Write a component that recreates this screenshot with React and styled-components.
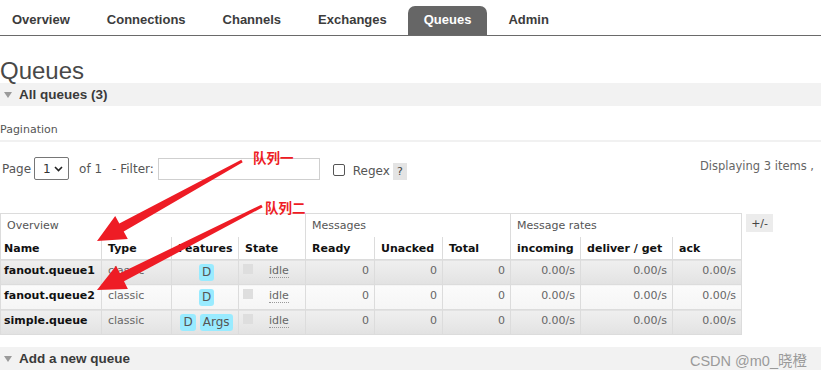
import React from "react";
import styled, { createGlobalStyle } from "styled-components";

const Global = createGlobalStyle`
  html, body { margin: 0; padding: 0; background: #fff; overflow: hidden; }
  body { width: 821px; height: 373px; font-family: "DejaVu Sans", Verdana, sans-serif; color: #484848; }
`;

const Page = styled.div`
  position: relative;
  width: 821px;
  height: 373px;
  overflow: hidden;
`;

const Nav = styled.ul`
  display: flex;
  gap: 5px;
  margin: 0;
  padding: 6px 0 0 0;
  list-style: none;
  border-bottom: 1px solid #6a6a6a;
  height: 29px;
`;

const Tab = styled.li`
  padding: 0 16px;
  margin-left: ${(p) => (p.$first ? "-4px" : "0")};
  height: 29px;
  line-height: 28px;
  font-family: "Liberation Sans", Arial, sans-serif;
  font-weight: bold;
  font-size: 13px;
  color: ${(p) => (p.$active ? "#fff" : "#3c3c3c")};
  background: ${(p) => (p.$active ? "#666" : "transparent")};
  border-radius: ${(p) => (p.$active ? "7px 7px 0 0" : "0")};
`;

const Title = styled.h1`
  margin: 23px 0 0 0;
  font-family: "Liberation Sans", Arial, sans-serif;
  font-weight: normal;
  font-size: 24px;
  line-height: 24px;
  color: #484848;
`;

const SectionBar = styled.div`
  display: flex;
  align-items: center;
  height: 23px;
  margin-top: ${(p) => p.$mt || 0}px;
  background: #f2f2f2;
  padding-left: 4px;
  gap: 7px;
`;

const Tri = styled.span`
  width: 0;
  height: 0;
  border-left: 4px solid transparent;
  border-right: 4px solid transparent;
  border-top: 6px solid #9a9a9a;
`;

const SectionLabel = styled.span`
  font-family: "Liberation Sans", Arial, sans-serif;
  font-weight: bold;
  font-size: ${(p) => p.$size || 13}px;
  color: #3a3a3a;
`;

const Watermark = styled.span`
  margin-left: auto;
  margin-right: 14px;
  font-family: "Liberation Sans Narrow", "Liberation Sans", "Noto Sans CJK SC", sans-serif;
  font-size: 14.5px;
  color: #9a9a9a;
  margin-top: 2px;
`;

const SubHead = styled.div`
  margin-top: 17px;
  font-size: 11px;
  line-height: 14px;
  padding-bottom: 3px;
  border-bottom: 2px solid #f1f1f1;
  color: #555;
`;

const FilterRow = styled.div`
  display: flex;
  align-items: center;
  height: 23px;
  margin-top: 15px;
  font-size: 12px;
  color: #555;
`;

const Label = styled.span`
  margin-left: ${(p) => p.$ml || 0}px;
  padding-top: ${(p) => p.$pt || 0}px;
`;

const Select = styled.div`
  box-sizing: border-box;
  display: flex;
  align-items: center;
  justify-content: space-between;
  width: 35px;
  height: 23px;
  margin-left: 3px;
  padding: 0 5px 0 8px;
  border: 1px solid #767676;
  border-radius: 2px;
  font-size: 12px;
  color: #333;
`;

const FilterInput = styled.input`
  box-sizing: border-box;
  width: 162px;
  height: 22px;
  margin-left: 4px;
  border: 1px solid #cfcfcf;
  padding: 0;
  outline: none;
`;

const Check = styled.input`
  appearance: none;
  box-sizing: border-box;
  width: 12px;
  height: 12px;
  margin: 2px 0 0 13px;
  border: 1px solid #555;
  border-radius: 2px;
  background: #fff;
`;

const Help = styled.span`
  display: flex;
  align-items: center;
  justify-content: center;
  width: 14px;
  height: 17px;
  margin: 6px 0 0 3px;
  background: #e4e4e4;
  color: #444;
  font-size: 11px;
`;

const Displaying = styled.span`
  margin-left: auto;
  margin-right: 7px;
  white-space: nowrap;
  padding-bottom: 5px;
  font-size: 11.5px;
  color: #666;
`;

const TableWrap = styled.div`
  display: flex;
  align-items: flex-start;
  gap: 4px;
  margin-top: 33px;
`;

const Table = styled.table`
  border-collapse: collapse;
  table-layout: fixed;
  width: 741px;
  font-size: 11px;
  border: 1px solid #dcdcdc;
`;

const GroupTh = styled.th`
  height: 23px;
  padding: 0 0 0 6px;
  text-align: left;
  font-weight: normal;
  color: #555;
  border-left: 1px solid #dcdcdc;
  border-top: 1px solid #dcdcdc;
  background: #fff;
`;

const Th = styled.th`
  height: 22px;
  padding: 0 3px 0 ${(p) => (p.$first ? 3 : 6)}px;
  text-align: left;
  font-weight: bold;
  color: #111;
  border-left: 1px solid #dcdcdc;
  white-space: nowrap;
  background: #fff;
`;

const Tr = styled.tr`
  height: 25px;
  background: ${(p) =>
    p.$alt
      ? "linear-gradient(to bottom, #fbfbfb, #f5f5f5)"
      : "linear-gradient(to bottom, #efefef, #e2e2e2)"};
  border-top: 1px solid #dcdcdc;
`;

const Td = styled.td`
  padding: 0 ${(p) => (p.$right ? 5 : 3)}px 3px ${(p) => (p.$first ? 3 : p.$pl || 6)}px;
  text-align: ${(p) => (p.$right ? "right" : p.$center ? "center" : "left")};
  color: ${(p) => (p.$bold ? "#111" : "#666")};
  font-weight: ${(p) => (p.$bold ? "bold" : "normal")};
  border-left: 1px solid #dcdcdc;
  white-space: nowrap;
  background: transparent;
`;

const Badge = styled.span`
  display: inline-block;
  padding: 0 3px;
  margin: 3px 2px 0;
  height: 17px;
  line-height: 17px;
  border-radius: 3px;
  background: #99ebff;
  color: #555;
  font-size: 12px;
  vertical-align: middle;
`;

const StateCell = styled.div`
  display: flex;
  align-items: center;
  gap: 16px;
`;

const StateBox = styled.span`
  width: 10px;
  height: 10px;
  background: #dedede;
  margin-top: -4px;
`;

const Idle = styled.span`
  color: #666;
  border-bottom: 1px dotted #999;
  line-height: 13px;
`;

const PlusMinus = styled.span`
  display: flex;
  align-items: center;
  justify-content: center;
  width: 27px;
  height: 18px;
  margin-top: 1px;
  background: #ececec;
  color: #444;
  font-size: 11px;
`;

const Overlay = styled.svg`
  position: absolute;
  left: 0;
  top: 0;
  pointer-events: none;
`;

const Annot = styled.span`
  position: absolute;
  left: ${(p) => p.$x}px;
  top: ${(p) => p.$y}px;
  font-family: "Noto Sans CJK SC", sans-serif;
  font-weight: bold;
  font-size: 13.5px;
  line-height: 16px;
  color: #ee1c25;
`;

function arrowPoints([tx, ty], [px, py], headLen, headHalf, tailHalf, neckHalf) {
  const dx = px - tx;
  const dy = py - ty;
  const len = Math.hypot(dx, dy);
  const ux = dx / len;
  const uy = dy / len;
  const nx = -uy;
  const ny = ux;
  const kx = px - ux * headLen;
  const ky = py - uy * headLen;
  const pts = [
    [tx + nx * tailHalf, ty + ny * tailHalf],
    [kx + nx * neckHalf, ky + ny * neckHalf],
    [kx + nx * headHalf, ky + ny * headHalf],
    [px, py],
    [kx - nx * headHalf, ky - ny * headHalf],
    [kx - nx * neckHalf, ky - ny * neckHalf],
    [tx - nx * tailHalf, ty - ny * tailHalf],
  ];
  return pts.map((p) => p.map((v) => v.toFixed(1)).join(",")).join(" ");
}

const rows = [
  { name: "fanout.queue1", feats: ["D"] },
  { name: "fanout.queue2", feats: ["D"], alt: true },
  { name: "simple.queue", feats: ["D", "Args"] },
];

const cols = [101, 70, 67, 67, 69, 68, 68, 70, 92, 69];

export default function App() {
  return (
    <Page>
      <Global />
      <Nav>
        <Tab $first>Overview</Tab>
        <Tab>Connections</Tab>
        <Tab>Channels</Tab>
        <Tab>Exchanges</Tab>
        <Tab $active>Queues</Tab>
        <Tab>Admin</Tab>
      </Nav>
      <Title>Queues</Title>
      <SectionBar>
        <Tri />
        <SectionLabel $size={13.5}>All queues (3)</SectionLabel>
      </SectionBar>
      <SubHead>Pagination</SubHead>
      <FilterRow>
        <Label $ml={2}>Page</Label>
        <Select>
          <span>1</span>
          <svg width="9" height="6" viewBox="0 0 9 6">
            <path d="M1 1 L4.5 4.5 L8 1" fill="none" stroke="#222" strokeWidth="1.6" />
          </svg>
        </Select>
        <Label $ml={10}>of 1</Label>
        <Label $ml={10}>- Filter:</Label>
        <FilterInput />
        <Check type="checkbox" />
        <Label $ml={8} $pt={4}>Regex</Label>
        <Help>?</Help>
        <Displaying>Displaying 3 items ,</Displaying>
      </FilterRow>
      <TableWrap>
        <Table>
          <colgroup>
            {cols.map((w, i) => (
              <col key={i} style={{ width: w }} />
            ))}
          </colgroup>
          <thead>
            <tr>
              <GroupTh colSpan={4}>Overview</GroupTh>
              <GroupTh colSpan={3}>Messages</GroupTh>
              <GroupTh colSpan={3}>Message rates</GroupTh>
            </tr>
            <tr>
              <Th $first>Name</Th>
              <Th>Type</Th>
              <Th>Features</Th>
              <Th>State</Th>
              <Th>Ready</Th>
              <Th>Unacked</Th>
              <Th>Total</Th>
              <Th>incoming</Th>
              <Th>deliver / get</Th>
              <Th>ack</Th>
            </tr>
          </thead>
          <tbody>
            {rows.map((r) => (
              <Tr key={r.name} $alt={r.alt}>
                <Td $first $bold>{r.name}</Td>
                <Td>classic</Td>
                <Td $center>
                  {r.feats.map((f) => (
                    <Badge key={f}>{f}</Badge>
                  ))}
                </Td>
                <Td $pl={4}>
                  <StateCell>
                    <StateBox />
                    <Idle>idle</Idle>
                  </StateCell>
                </Td>
                <Td $right>0</Td>
                <Td $right>0</Td>
                <Td $right>0</Td>
                <Td $right>0.00/s</Td>
                <Td $right>0.00/s</Td>
                <Td $right>0.00/s</Td>
              </Tr>
            ))}
          </tbody>
        </Table>
        <PlusMinus>+/-</PlusMinus>
      </TableWrap>
      <SectionBar $mt={12}>
        <Tri />
        <SectionLabel $size={13.5}>Add a new queue</SectionLabel>
        <Watermark>CSDN @m0_晓橙</Watermark>
      </SectionBar>

      <Overlay width="821" height="373" viewBox="0 0 821 373">
        <polygon
          points={arrowPoints([242, 161], [97, 241], 28, 13, 1.5, 4.5)}
          fill="#ee1c25"
        />
        <polygon
          points={arrowPoints([262, 206], [97, 290], 28, 13, 1.5, 4.5)}
          fill="#ee1c25"
        />
      </Overlay>
      <Annot $x={253} $y={149}>队列一</Annot>
      <Annot $x={265} $y={199}>队列二</Annot>
    </Page>
  );
}
